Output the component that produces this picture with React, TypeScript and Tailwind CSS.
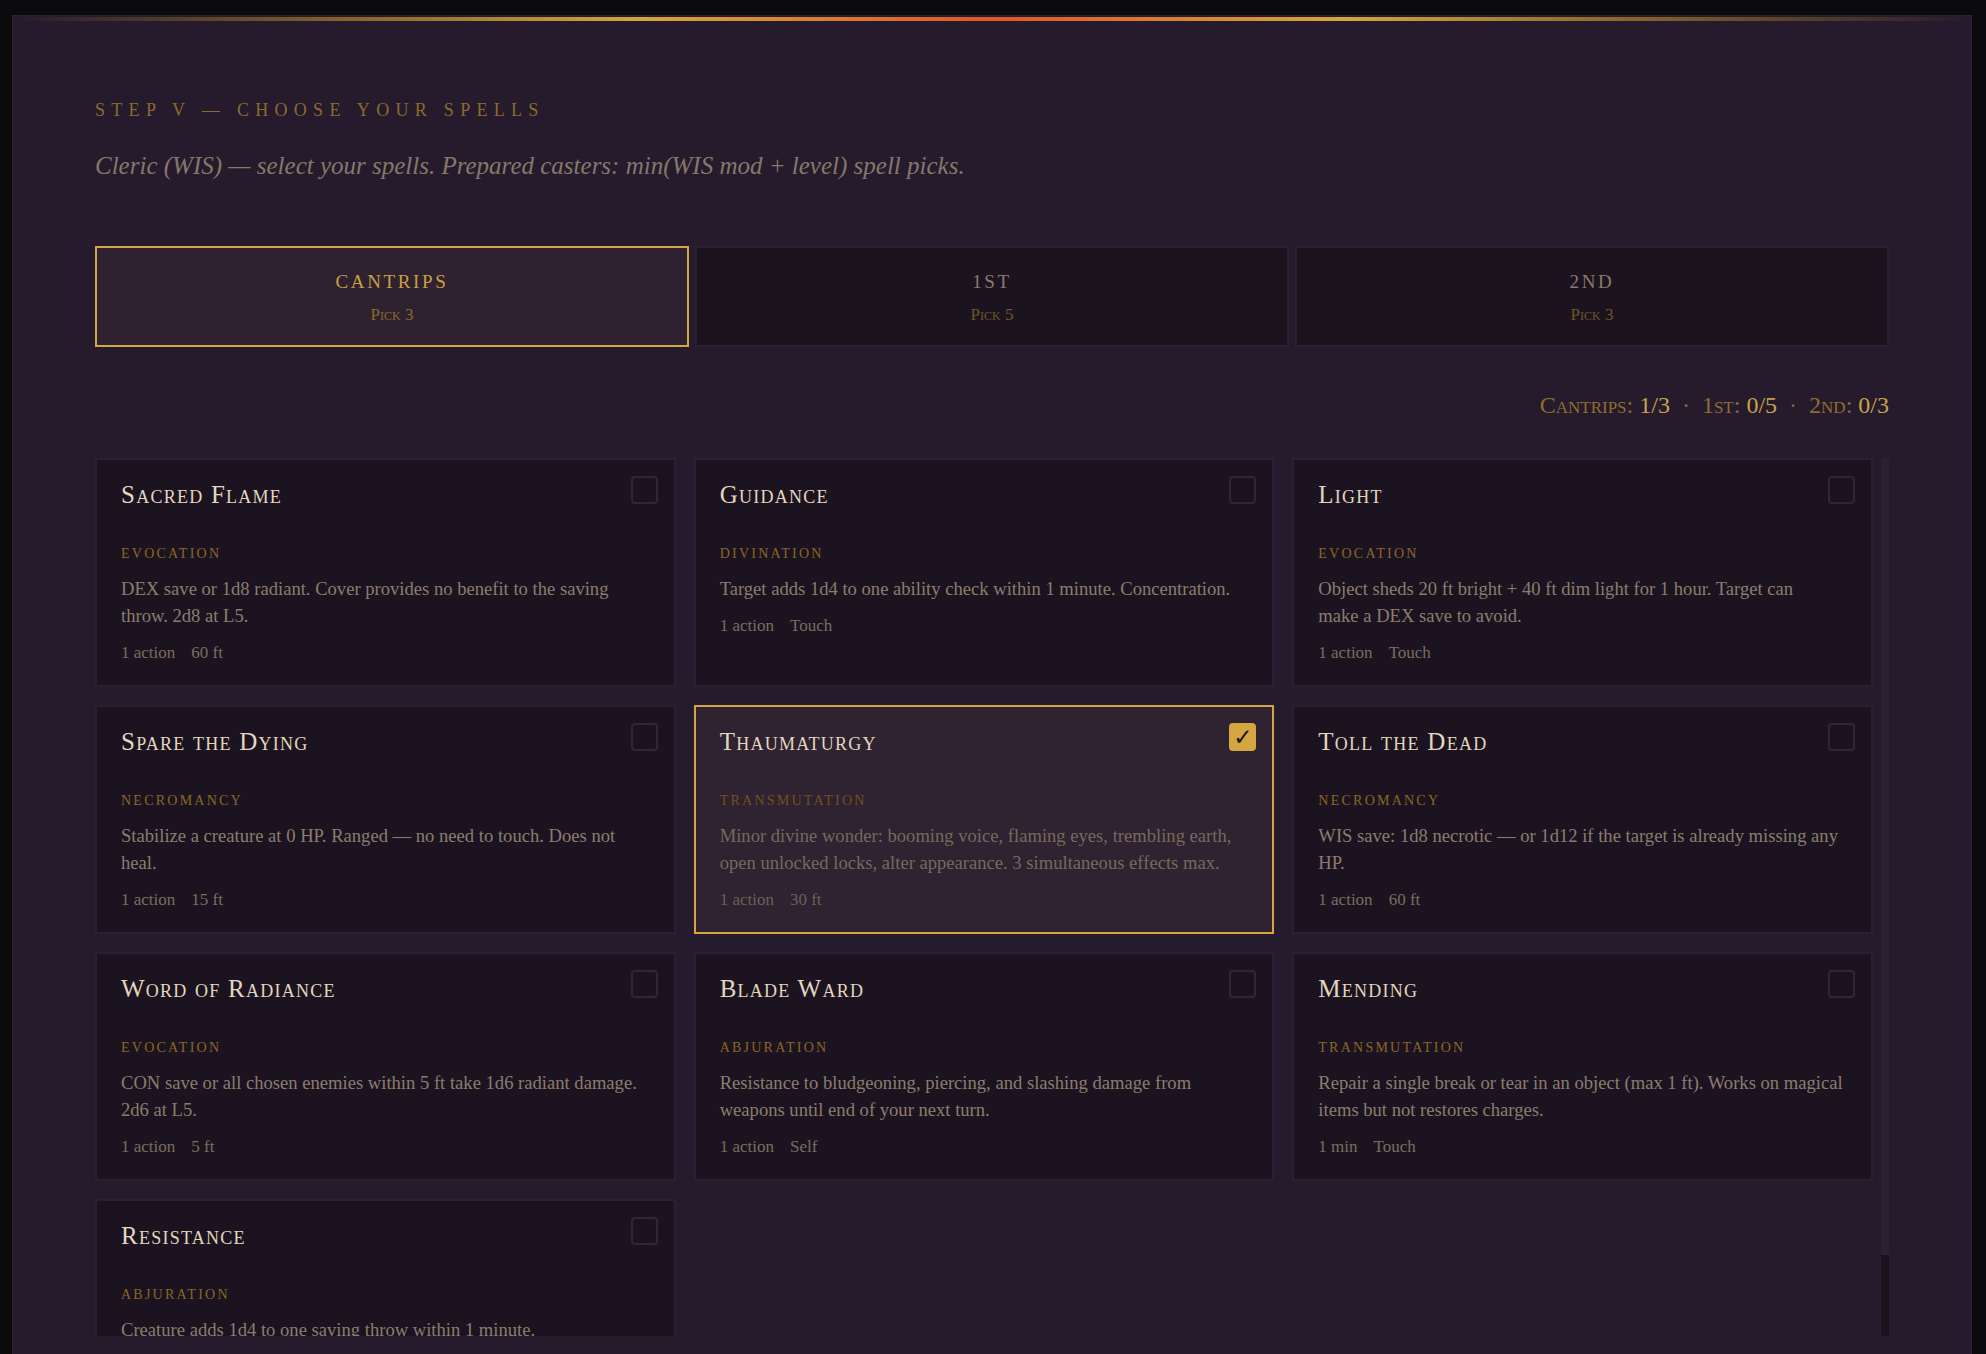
import { useState } from "react";

type Spell = {
  name: string;
  school: string;
  desc: string;
  time: string;
  range: string;
};

const spells: Spell[] = [
  { name: "Sacred Flame", school: "Evocation", desc: "DEX save or 1d8 radiant. Cover provides no benefit to the saving throw. 2d8 at L5.", time: "1 action", range: "60 ft" },
  { name: "Guidance", school: "Divination", desc: "Target adds 1d4 to one ability check within 1 minute. Concentration.", time: "1 action", range: "Touch" },
  { name: "Light", school: "Evocation", desc: "Object sheds 20 ft bright + 40 ft dim light for 1 hour. Target can make\u00a0a DEX save to avoid.", time: "1 action", range: "Touch" },
  { name: "Spare the Dying", school: "Necromancy", desc: "Stabilize a creature at 0 HP. Ranged — no need to touch. Does not heal.", time: "1 action", range: "15 ft" },
  { name: "Thaumaturgy", school: "Transmutation", desc: "Minor divine wonder: booming voice, flaming eyes, trembling earth, open unlocked locks, alter appearance. 3 simultaneous effects max.", time: "1 action", range: "30 ft" },
  { name: "Toll the Dead", school: "Necromancy", desc: "WIS save: 1d8 necrotic — or 1d12 if the target is already missing any HP.", time: "1 action", range: "60 ft" },
  { name: "Word of Radiance", school: "Evocation", desc: "CON save or all chosen enemies within 5 ft take 1d6 radiant damage. 2d6 at L5.", time: "1 action", range: "5 ft" },
  { name: "Blade Ward", school: "Abjuration", desc: "Resistance to bludgeoning, piercing, and slashing damage from weapons until end of your next turn.", time: "1 action", range: "Self" },
  { name: "Mending", school: "Transmutation", desc: "Repair a single break or tear in an object (max 1 ft). Works on magical items but not restores charges.", time: "1 min", range: "Touch" },
  { name: "Resistance", school: "Abjuration", desc: "Creature adds 1d4 to one saving throw within 1 minute.", time: "1 action", range: "Touch" },
];

const tabs = [
  { label: "Cantrips", pick: "Pick 3" },
  { label: "1st", pick: "Pick 5" },
  { label: "2nd", pick: "Pick 3" },
];

function SpellCard({ spell, picked, onToggle }: { spell: Spell; picked: boolean; onToggle: () => void }) {
  return (
    <div
      onClick={onToggle}
      className={
        picked
          ? "flex cursor-pointer flex-col border-2 border-[#d4a640] bg-[#2f2231] px-6 pt-6 pb-5"
          : "flex cursor-pointer flex-col border-2 border-[#2b2033] bg-[#1b1420] px-6 pt-6 pb-5"
      }
    >
      <div className="flex items-start justify-between">
        <h3 className="text-[25px] leading-[22px] tracking-[0.05em] text-[#e3d6bf] [font-variant:small-caps]">
          {spell.name}
        </h3>
        {picked ? (
          <span className="-mt-2 -mr-2 flex h-[28px] w-[27px] items-center justify-center rounded-[4px] bg-[#d4a640] font-['DejaVu_Sans',sans-serif] text-[23px] leading-none font-bold text-[#15101a]">
            ✓
          </span>
        ) : (
          <span className="-mt-2 -mr-2 h-[28px] w-[27px] rounded-[4px] border-2 border-[#30253a]" />
        )}
      </div>
      <div
        className={
          picked
            ? "mt-[39px] text-[14px] leading-[18px] tracking-[0.16em] text-[#6f5122] uppercase"
            : "mt-[39px] text-[14px] leading-[18px] tracking-[0.16em] text-[#8b6624] uppercase"
        }
      >
        {spell.school}
      </div>
      <p className={picked ? "mt-3 text-[18.6px] leading-[27px] text-[#77695d]" : "mt-3 text-[18.6px] leading-[27px] text-[#8a7d6d]"}>
        {spell.desc}
      </p>
      <div className={picked ? "mt-3 flex gap-4 text-[17px] leading-[24px] text-[#6c6055]" : "mt-3 flex gap-4 text-[17px] leading-[24px] text-[#7a6d5f]"}>
        <span>{spell.time}</span>
        <span>{spell.range}</span>
      </div>
    </div>
  );
}

export default function App() {
  const [active, setActive] = useState(0);
  const [picked, setPicked] = useState<string[]>(["Thaumaturgy"]);

  const toggle = (name: string) =>
    setPicked((prev) => (prev.includes(name) ? prev.filter((n) => n !== name) : [...prev, name]));

  return (
    <div className="h-screen overflow-hidden bg-[#0b0a0c] pt-[15px] pr-[14px] pl-3 font-['Liberation_Serif',serif]">
      <div className="relative border border-[#2e2336] bg-[#261b2d] px-[82px] pt-[82px] pb-[18px]">
        <div className="absolute top-px right-0 left-0 h-[4px] bg-[linear-gradient(to_right,transparent_0%,#7a5a2a_15%,#d4a640_32%,#e0562a_50%,#d4a640_68%,#7a5a2a_85%,transparent_100%)]" />

        <div className="text-[18px] leading-[24px] tracking-[0.35em] text-[#8a6a2e] uppercase">
          Step V — Choose your spells
        </div>
        <p className="mt-7 text-[25px] leading-[32px] text-[#857868] italic">
          Cleric (WIS) — select your spells. Prepared casters: min(WIS mod + level) spell picks.
        </p>

        <div className="mt-16 grid grid-cols-3 gap-[6px]">
          {tabs.map((t, i) => (
            <button
              key={t.label}
              onClick={() => setActive(i)}
              className={
                i === active
                  ? "flex h-[101px] flex-col items-center justify-center gap-[10px] border-2 border-[#d4a640] bg-[#2f2130]"
                  : "flex h-[101px] flex-col items-center justify-center gap-[10px] border-2 border-[#2b2033] bg-[#1b141f]"
              }
            >
              <span
                className={
                  i === active
                    ? "text-[19px] leading-[26px] tracking-[0.14em] text-[#c9a040] uppercase"
                    : "text-[19px] leading-[26px] tracking-[0.14em] text-[#8b7b6c] uppercase"
                }
              >
                {t.label}
              </span>
              <span
                className={
                  i === active
                    ? "text-[17px] leading-[20px] text-[#8a6a2c] [font-variant:small-caps]"
                    : "text-[17px] leading-[20px] text-[#6e5628] [font-variant:small-caps]"
                }
              >
                {t.pick}
              </span>
            </button>
          ))}
        </div>

        <div className="mt-[43px] flex justify-end text-[24px] leading-[30px] text-[#8f6e2c] [font-variant:small-caps]">
          <span>
            Cantrips: <span className="text-[#c9a24a]">1/3</span>
          </span>
          <span className="mx-3">·</span>
          <span>
            1st: <span className="text-[#c9a24a]">0/5</span>
          </span>
          <span className="mx-3">·</span>
          <span>
            2nd: <span className="text-[#c9a24a]">0/3</span>
          </span>
        </div>

        <div className="mt-[38px] flex h-[878px] gap-[8px]">
          <div className="min-w-0 flex-1 overflow-hidden">
            <div className="grid grid-cols-3 gap-[18px]">
              {spells.map((s) => (
                <SpellCard key={s.name} spell={s} picked={picked.includes(s.name)} onToggle={() => toggle(s.name)} />
              ))}
            </div>
          </div>
          <div className="flex w-2 flex-col bg-[#19131d]">
            <div className="h-[797px] bg-[#2c2134]" />
          </div>
        </div>
      </div>
    </div>
  );
}
